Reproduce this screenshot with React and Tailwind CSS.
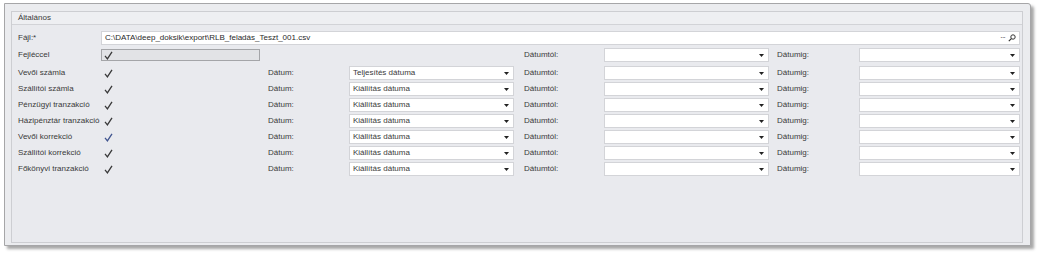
import React from 'react'

const FONT = { fontFamily: "'Liberation Sans', Arial, sans-serif" }

const ROWS = [
  { label: 'Vevői számla', value: 'Teljesítés dátuma' },
  { label: 'Szállítói számla', value: 'Kiállítás dátuma' },
  { label: 'Pénzügyi tranzakció', value: 'Kiállítás dátuma' },
  { label: 'Házipénztár tranzakció', value: 'Kiállítás dátuma' },
  { label: 'Vevői korrekció', value: 'Kiállítás dátuma', focus: true },
  { label: 'Szállítói korrekció', value: 'Kiállítás dátuma' },
  { label: 'Főkönyvi tranzakció', value: 'Kiállítás dátuma' },
]

function Check({ blue }) {
  return (
    <svg width="9" height="9" viewBox="0 0 9 9">
      <path d="M1 4.8 L3.4 7.8 L8 0.8" fill="none" stroke={blue ? '#41558f' : '#3a3a3a'} strokeWidth="1.3" />
    </svg>
  )
}

function Arrow() {
  return (
    <svg width="5" height="3" viewBox="0 0 5 3">
      <path d="M0 0 H5 L2.5 3 Z" fill="#222" />
    </svg>
  )
}

function Combo({ width, value }) {
  return (
    <div
      className="h-[14px] bg-white border border-[#d3d4d8] flex items-center justify-between pl-[3px] pr-[4px] shrink-0"
      style={{ width }}
    >
      <span className="text-[8px] text-[#3a3a3a] leading-none whitespace-nowrap">{value}</span>
      <Arrow />
    </div>
  )
}

function Label({ width, children }) {
  return (
    <div className="shrink-0 text-[8px] text-[#3a3a3a] leading-none whitespace-nowrap" style={{ width }}>
      {children}
    </div>
  )
}

function DateRange() {
  return (
    <>
      <Label width={80}>Dátumtól:</Label>
      <Combo width={165} />
      <div className="w-[8px] shrink-0" />
      <Label width={82}>Dátumig:</Label>
      <Combo width={161} />
    </>
  )
}

export default function App() {
  return (
    <div className="w-[1039px] h-[254px] bg-white pt-[3px] pl-[4px]" style={FONT}>
      <div className="w-[1027px] h-[243px] border border-[#a6a6a8] rounded-tr-[3px] bg-[#ebecef] shadow-[3px_3px_3px_rgba(0,0,0,0.35)] pt-[7px] pl-[6px]">
        <div className="w-[1012px] h-[232px] border border-[#cdced2] bg-[#e9eaee]">
          <div className="h-[13px] bg-[#eeeff2] border-b border-[#d2d3d7] flex items-center pl-[6px]">
            <span className="text-[8px] text-[#3a3a3a] leading-none">Általános</span>
          </div>

          <div className="pl-[6px] pt-[6px] flex flex-col">
            {/* Fájl */}
            <div className="flex items-center h-[14px]">
              <Label width={83}>Fájl:*</Label>
              <div className="w-[919px] h-[14px] bg-white border border-[#d3d4d8] flex items-center justify-between pl-[3px] pr-[3px]">
                <span className="text-[8px] text-[#2a2a2a] leading-none whitespace-nowrap">C:\DATA\deep_doksik\export\RLB_feladás_Teszt_001.csv</span>
                <span className="flex items-center gap-[3px]">
                  <span className="text-[8px] text-[#333] leading-none tracking-[-1px]">···</span>
                  <svg width="8" height="8" viewBox="0 0 8 8">
                    <circle cx="5" cy="3" r="2.2" fill="none" stroke="#333" strokeWidth="1" />
                    <path d="M3.4 4.6 L0.8 7.2" stroke="#333" strokeWidth="1.2" />
                  </svg>
                </span>
              </div>
            </div>

            {/* Fejléccel */}
            <div className="flex items-center h-[14px] mt-[3px]">
              <Label width={83}>Fejléccel</Label>
              <div className="w-[159px] h-[12px] bg-[#e2e3e6] border border-[#a4a5a8] flex items-center pl-[2px] shrink-0">
                <Check />
              </div>
              <div className="w-[264px] shrink-0" />
              <DateRange />
            </div>

            <div className="flex flex-col gap-[2px] mt-[4px]">
              {ROWS.map(r => (
                <div key={r.label} className="flex items-center h-[14px]">
                  <Label width={83}>{r.label}</Label>
                  <div className="w-[167px] shrink-0 pl-[3px] flex items-center">
                    <Check blue={r.focus} />
                  </div>
                  <Label width={81}>Dátum:</Label>
                  <Combo width={165} value={r.value} />
                  <div className="w-[10px] shrink-0" />
                  <DateRange />
                </div>
              ))}
            </div>
          </div>
        </div>
      </div>
    </div>
  )
}
